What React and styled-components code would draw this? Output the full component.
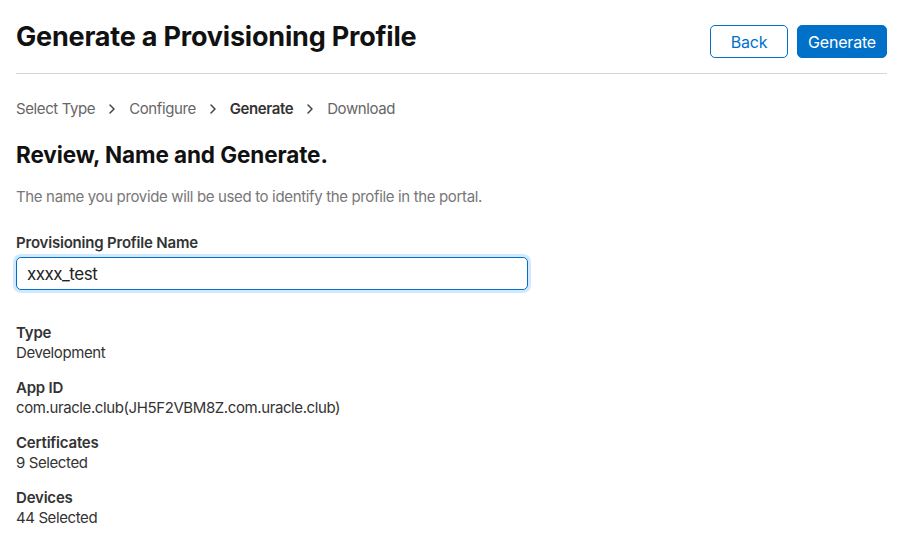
import React from "react";
import styled, { createGlobalStyle } from "styled-components";

const GlobalStyle = createGlobalStyle`
  body {
    margin: 0;
    background: #fff;
    font-family: Inter, "Noto Sans", "Liberation Sans", sans-serif;
    color: #1d1d1f;
    -webkit-font-smoothing: antialiased;
  }
`;

const Page = styled.div`
  padding: 0 23px 0 16px;
`;

const Header = styled.div`
  display: flex;
  align-items: center;
  justify-content: space-between;
  height: 73px;
  border-bottom: 1px solid #d6d6d6;
`;

const Title = styled.h1`
  margin: 0;
  font-size: 27px;
  font-weight: 700;
  letter-spacing: -0.2px;
  color: #111;
`;

const Actions = styled.div`
  display: flex;
  gap: 9px;
  transform: translateY(5px);
`;

const Button = styled.button`
  width: ${(p) => (p.$primary ? "90px" : "78px")};
  height: 33px;
  padding: 0;
  border-radius: 5px;
  font-family: inherit;
  font-size: 16px;
  letter-spacing: -0.2px;
  border: 1px solid #0070c9;
  background: ${(p) => (p.$primary ? "#0070c9" : "#fff")};
  color: ${(p) => (p.$primary ? "#fff" : "#0070c9")};
`;

const Crumbs = styled.nav`
  display: flex;
  align-items: center;
  gap: 11px;
  margin-top: 25px;
  font-size: 15px;
  letter-spacing: -0.4px;
`;

const Crumb = styled.span`
  font-weight: ${(p) => (p.$current ? 600 : 400)};
  color: ${(p) => (p.$current ? "#333" : "#666")};
`;

const Chevron = () => (
  <svg width="12" height="12" viewBox="0 0 12 12">
    <path d="M4 2 L8 6 L4 10" fill="none" stroke="#444" strokeWidth="1.5" strokeLinecap="round" strokeLinejoin="round" />
  </svg>
);

const Subtitle = styled.h2`
  margin: 23px 0 0;
  font-size: 22.5px;
  font-weight: 700;
  letter-spacing: -0.1px;
  color: #111;
`;

const Desc = styled.p`
  margin: 19px 0 0;
  font-size: 15px;
  letter-spacing: -0.35px;
  color: #777;
`;

const Label = styled.div`
  font-size: 15px;
  font-weight: 600;
  letter-spacing: -0.2px;
  color: #333;
`;

const Field = styled.div`
  margin-top: 27px;
  width: 512px;
  display: flex;
  flex-direction: column;
  gap: 5px;
`;

const Input = styled.input`
  height: 33px;
  box-sizing: border-box;
  border: 1px solid #0070c9;
  border-radius: 5px;
  box-shadow: 0 0 0 3px rgba(0, 125, 250, 0.18);
  padding: 0 10px;
  font-family: inherit;
  font-size: 17px;
  letter-spacing: -0.5px;
  color: #222;
  outline: none;
`;

const Summary = styled.dl`
  margin: 33px 0 0;
  display: flex;
  flex-direction: column;
  gap: 16px;
`;

const Item = styled.div`
  display: flex;
  flex-direction: column;
  gap: 1px;
`;

const Value = styled.dd`
  margin: 0;
  font-size: 15px;
  letter-spacing: -0.4px;
  color: #333;
`;

const items = [
  ["Type", "Development"],
  ["App ID", "com.uracle.club(JH5F2VBM8Z.com.uracle.club)"],
  ["Certificates", "9 Selected"],
  ["Devices", "44 Selected"],
];

export default function App() {
  return (
    <Page>
      <GlobalStyle />
      <Header>
        <Title>Generate a Provisioning Profile</Title>
        <Actions>
          <Button>Back</Button>
          <Button $primary>Generate</Button>
        </Actions>
      </Header>
      <Crumbs>
        <Crumb>Select Type</Crumb>
        <Chevron />
        <Crumb>Configure</Crumb>
        <Chevron />
        <Crumb $current>Generate</Crumb>
        <Chevron />
        <Crumb>Download</Crumb>
      </Crumbs>
      <Subtitle>Review, Name and Generate.</Subtitle>
      <Desc>The name you provide will be used to identify the profile in the portal.</Desc>
      <Field>
        <Label as="label">Provisioning Profile Name</Label>
        <Input defaultValue="xxxx_test" />
      </Field>
      <Summary>
        {items.map(([k, v]) => (
          <Item key={k}>
            <Label as="dt">{k}</Label>
            <Value>{v}</Value>
          </Item>
        ))}
      </Summary>
    </Page>
  );
}
